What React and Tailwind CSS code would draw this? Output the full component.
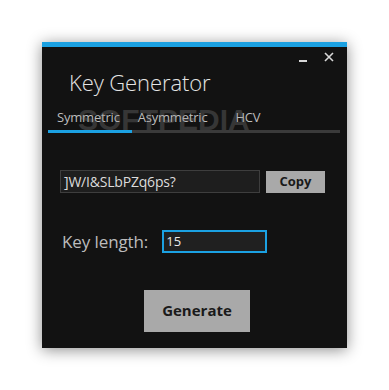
export default function App() {
  const font = { fontFamily: '"Open Sans", "Noto Sans", sans-serif' }
  return (
    <div className="w-[389px] h-[390px] bg-white pt-[42px] pl-[42px]" style={font}>
      <div className="relative w-[305px] h-[306px] bg-[#121212] shadow-[0_2px_14px_rgba(0,0,0,0.45)] flex flex-col">
        <div className="h-[5px] bg-[#1ba1e2]" />

        {/* window controls */}
        <div className="absolute right-[13px] top-[9px] flex items-center gap-[17px] text-[#d8d8d8]">
          <div className="w-[8px] h-[2px] bg-[#d8d8d8] mt-[9px]" />
          <svg width="10" height="10" viewBox="0 0 10 10">
            <path d="M1 1L9 9M9 1L1 9" stroke="#d8d8d8" strokeWidth="1.6" />
          </svg>
        </div>

        <h1 className="mt-[21px] ml-[27px] text-[22px] leading-[29px] font-light text-[#e4e4e4] tracking-[-0.1px]">Key Generator</h1>

        {/* tabs */}
        <div className="relative mt-[11px] ml-[6px] w-[292px]">
          <div className="flex items-end text-[13px] leading-[18px] text-[#bdbdbd] tracking-[-0.2px]">
            <span className="ml-[9px]">Symmetric</span>
            <span className="ml-[18px]">Asymmetric</span>
            <span className="ml-[28px]">HCV</span>
          </div>
          <div className="mt-[4px] flex h-[3px]">
            <div className="w-[84px] bg-[#1ba1e2]" />
            <div className="flex-1 bg-[#3a3a3a]" />
          </div>
          <div className="absolute left-[30px] top-[-5px] text-[30px] leading-[34px] font-bold text-[#8a8a8a] opacity-30 pointer-events-none" style={{ fontFamily: '"Liberation Sans", sans-serif' }}>
            SOFTPEDIA
          </div>
        </div>

        {/* key output */}
        <div className="mt-[37px] ml-[18px] flex items-center gap-[6px]">
          <div className="w-[200px] h-[23px] border border-[#3e3e3e] bg-[#1e1e1e] flex items-center px-[3px] text-[14px] text-[#dcdcdc] tracking-[-0.2px]">
            ]W/I&amp;SLbPZq6ps?
          </div>
          <button className="w-[59px] h-[22px] bg-[#a9a9a9] text-[13px] font-bold text-[#1a1a1a]">Copy</button>
        </div>

        {/* key length */}
        <div className="mt-[36px] ml-[20px] flex items-center">
          <span className="text-[17px] text-[#bcbcbc] tracking-[-0.1px]">Key length:</span>
          <div className="ml-[14px] w-[105px] h-[23px] border-[2px] border-[#1ba1e2] bg-[#202020] flex items-center px-[2px] text-[13px] text-[#e8e8e8]">
            15
          </div>
        </div>

        {/* generate */}
        <div className="mt-[35px] pl-[102px]">
          <button className="w-[106px] h-[42px] bg-[#a9a9a9] text-[15px] font-bold text-[#1a1a1a]">Generate</button>
        </div>
      </div>
    </div>
  )
}
